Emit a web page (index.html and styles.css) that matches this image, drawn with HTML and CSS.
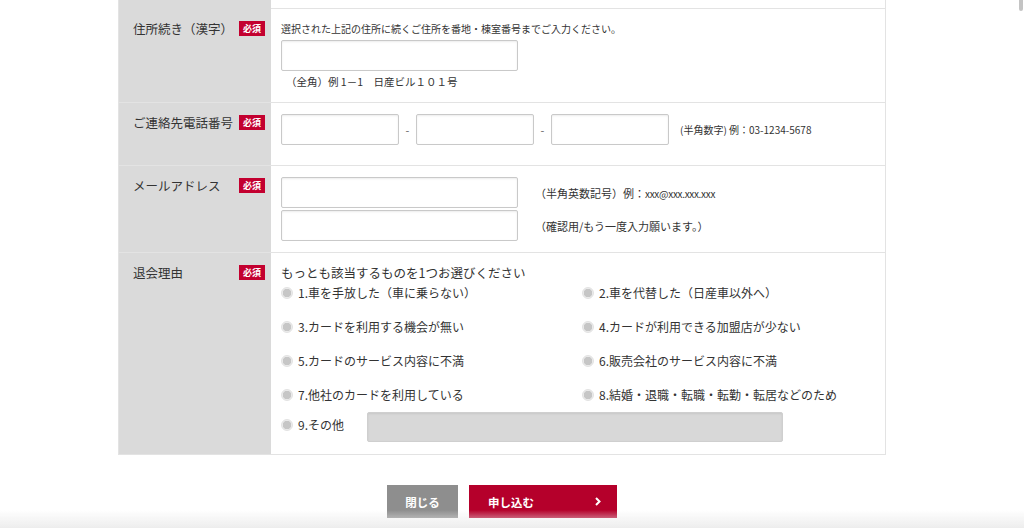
FILE: index.html
```html
<!DOCTYPE html>
<html lang="ja">
<head>
    <meta charset="UTF-8">
    <meta name="viewport" content="width=device-width, initial-scale=1.0">
    <title>退会申し込み</title>
    <link rel="stylesheet" href="styles.css">
</head>
<body>
    <div class="page">
        <div class="form-table">
            <div class="form-row row-cut">
                <div class="form-label"></div>
                <div class="form-body"></div>
            </div>

            <div class="form-row">
                <div class="form-label">
                    <span>住所続き（漢字）</span>
                    <span class="required">必須</span>
                </div>
                <div class="form-body body-address">
                    <p class="note">選択された上記の住所に続くご住所を番地・棟室番号までご入力ください。</p>
                    <input type="text" class="text-input input-wide">
                    <p class="example">（全角）例 1－1　日産ビル１０１号</p>
                </div>
            </div>

            <div class="form-row">
                <div class="form-label">
                    <span>ご連絡先電話番号</span>
                    <span class="required">必須</span>
                </div>
                <div class="form-body body-phone">
                    <div class="phone-group">
                        <input type="text" class="text-input input-phone">
                        <span class="dash">-</span>
                        <input type="text" class="text-input input-phone">
                        <span class="dash">-</span>
                        <input type="text" class="text-input input-phone">
                        <span class="hint-small">(半角数字) 例：03-1234-5678</span>
                    </div>
                </div>
            </div>

            <div class="form-row">
                <div class="form-label">
                    <span>メールアドレス</span>
                    <span class="required">必須</span>
                </div>
                <div class="form-body body-mail">
                    <div class="mail-line">
                        <input type="text" class="text-input input-wide">
                        <span class="hint">（半角英数記号）例：<span class="mail-sample">xxx@xxx.xxx.xxx</span></span>
                    </div>
                    <div class="mail-line">
                        <input type="text" class="text-input input-wide">
                        <span class="hint">（確認用/もう一度入力願います。）</span>
                    </div>
                </div>
            </div>

            <div class="form-row">
                <div class="form-label">
                    <span>退会理由</span>
                    <span class="required">必須</span>
                </div>
                <div class="form-body body-reason">
                    <p class="lead">もっとも該当するものを1つお選びください</p>
                    <div class="reason-grid">
                        <label class="radio"><span class="radio-dot"></span>1.車を手放した（車に乗らない）</label>
                        <label class="radio"><span class="radio-dot"></span>2.車を代替した（日産車以外へ）</label>
                        <label class="radio"><span class="radio-dot"></span>3.カードを利用する機会が無い</label>
                        <label class="radio"><span class="radio-dot"></span>4.カードが利用できる加盟店が少ない</label>
                        <label class="radio"><span class="radio-dot"></span>5.カードのサービス内容に不満</label>
                        <label class="radio"><span class="radio-dot"></span>6.販売会社のサービス内容に不満</label>
                        <label class="radio"><span class="radio-dot"></span>7.他社のカードを利用している</label>
                        <label class="radio"><span class="radio-dot"></span>8.結婚・退職・転職・転勤・転居などのため</label>
                    </div>
                    <div class="other-line">
                        <label class="radio radio-other"><span class="radio-dot"></span>9.その他</label>
                        <input type="text" class="text-input input-other" disabled>
                    </div>
                </div>
            </div>
        </div>

        <div class="actions">
            <button type="button" class="btn btn-close">閉じる</button>
            <button type="button" class="btn btn-submit">
                <span>申し込む</span>
                <svg width="6" height="9" viewBox="0 0 6 9"><path d="M1 1l3.5 3.5L1 8" fill="none" stroke="#fff" stroke-width="2"/></svg>
            </button>
        </div>
    </div>

    <div class="scroll-thumb"></div>
    <div class="bottom-shade"></div>
</body>
</html>
```

FILE: styles.css
```css
* {
    margin: 0;
    padding: 0;
    box-sizing: border-box;
}

body {
    font-family: "Noto Sans CJK JP", "Noto Sans", sans-serif;
    color: #333;
    background-color: #fff;
    overflow: hidden;
}

.page {
    width: 1004px;
}

.form-table {
    width: 768px;
    margin: 0 auto;
    border-left: 1px solid #e3e3e3;
    border-right: 1px solid #e3e3e3;
}

.form-row {
    display: grid;
    grid-template-columns: 152px 1fr;
    border-bottom: 1px solid #e3e3e3;
}

.row-cut {
    height: 9px;
}

.form-label {
    background-color: #dadada;
    display: flex;
    justify-content: space-between;
    align-items: flex-start;
    padding: 10px 6px 0 14px;
    font-size: 12.5px;
    line-height: 19px;
}

.required {
    display: inline-block;
    background-color: #c3002f;
    color: #fff;
    font-size: 9px;
    font-weight: bold;
    line-height: 15px;
    width: 26px;
    text-align: center;
    margin-top: 2px;
}

.form-body {
    padding: 11px 9px 10px 10px;
}

.body-address {
    padding-bottom: 11px;
}

.body-phone {
    padding-bottom: 20px;
}

.body-mail {
    padding-bottom: 11px;
}

.body-reason {
    padding-bottom: 12px;
}

.note {
    font-size: 10px;
    line-height: 18px;
}

.example {
    font-size: 10.5px;
    line-height: 18px;
    margin-top: 2px;
    padding-left: 5px;
}

.text-input {
    display: block;
    height: 31px;
    border: 1px solid #c9c9c9;
    border-radius: 2px;
    background-color: #fff;
    box-shadow: inset 0 1px 2px rgba(0, 0, 0, 0.08);
}

.input-wide {
    width: 237px;
    margin-top: 2px;
}

.phone-group {
    display: flex;
    align-items: center;
}

.input-phone {
    width: 118px;
    height: 31px;
}

.dash {
    width: 17px;
    text-align: center;
    font-size: 11px;
    color: #666;
}

.hint-small {
    font-size: 10px;
    margin-left: 11px;
}

.mail-line {
    display: flex;
    align-items: center;
}

.mail-line + .mail-line {
    margin-top: 2px;
}

.mail-line .input-wide {
    margin-top: 0;
}

.hint {
    font-size: 11px;
    margin-left: 17px;
}

.mail-sample {
    font-size: 10px;
    letter-spacing: -0.3px;
}

.lead {
    font-size: 12.5px;
    line-height: 18px;
}

.reason-grid {
    display: grid;
    grid-template-columns: 301px 1fr;
    row-gap: 14px;
    margin-top: 1px;
}

.radio {
    display: flex;
    align-items: center;
    font-size: 12px;
    line-height: 20px;
    white-space: nowrap;
}

.radio-dot {
    width: 12px;
    height: 12px;
    border-radius: 50%;
    margin-right: 5px;
    background: radial-gradient(circle, #c6c6c6 0, #c6c6c6 4px, #ebebeb 4.5px);
    border: 1px solid #e2e2e2;
}

.other-line {
    display: flex;
    align-items: center;
    margin-top: 7px;
}

.radio-other {
    width: 86px;
    margin-top: -5px;
}

.input-other {
    width: 416px;
    height: 30px;
    background-color: #d8d8d8;
    border-color: #cfcfcf;
}

.actions {
    display: flex;
    justify-content: center;
    gap: 11px;
    margin-top: 30px;
}

.btn {
    border: none;
    height: 33px;
    color: #fff;
    font-family: inherit;
    font-size: 11.5px;
    font-weight: bold;
    cursor: pointer;
}

.btn-close {
    width: 71px;
    background-color: #8e8e8e;
}

.btn-submit {
    width: 148px;
    background-color: #b5002b;
    display: flex;
    justify-content: space-between;
    align-items: center;
    padding: 0 16px 0 19px;
}

.scroll-thumb {
    position: fixed;
    top: 0;
    right: 1px;
    width: 4px;
    height: 11px;
    background-color: #c4c4c4;
    border-radius: 0 0 2px 2px;
}

.bottom-shade {
    position: fixed;
    left: 0;
    right: 0;
    bottom: 0;
    height: 18px;
    background: linear-gradient(rgba(235, 235, 235, 0), rgba(235, 235, 235, 0.9));
    pointer-events: none;
}
```
